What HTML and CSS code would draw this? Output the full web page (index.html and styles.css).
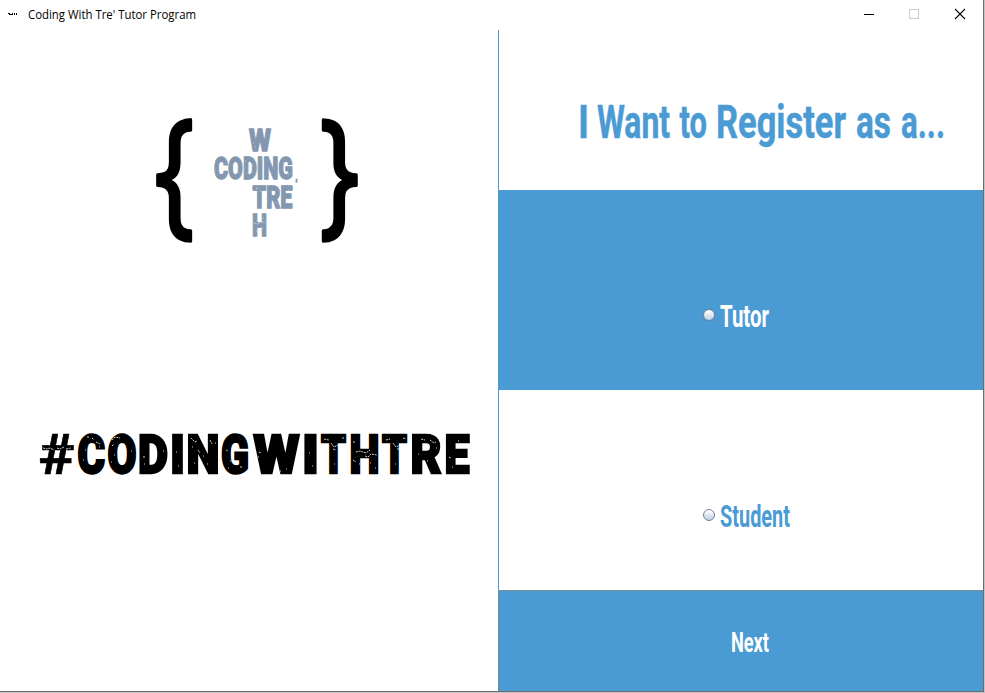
FILE: index.html
```html
<!DOCTYPE html>
<html lang="en">
<head>
<meta charset="utf-8">
<title>Coding With Tre' Tutor Program</title>
<link rel="stylesheet" href="styles.css">
</head>
<body>
<div class="window">
  <header class="titlebar">
    <svg class="app-icon" width="10" height="4" viewBox="0 0 10 4"><path d="M0 .5h2M1 1.500h3M4.500 0v2M6.500 0v2M8.500 0v2"/></svg>
    <svg class="caption" width="180" height="22"><text x="0" y="14" textLength="168" lengthAdjust="spacingAndGlyphs">Coding With Tre' Tutor Program</text></svg>
    <svg class="controls" width="104" height="12" viewBox="0 0 104 12">
      <path class="min" d="M1 5.500h10"/>
      <rect class="max" x="46.500" y=".5" width="9" height="9"/>
      <path class="close" d="M92 0l10 10M102 0L92 10"/>
    </svg>
  </header>
  <main class="content">
    <section class="brand">
      <svg width="498" height="661" viewBox="0 30 498 661">
        <g class="brace">
          <text transform="translate(154.500 219) scale(.870 1.165)" x="0" y="0">{</text>
          <text transform="translate(319.700 219) scale(.870 1.165)" x="0" y="0">}</text>
        </g>
        <g class="mark">
          <text x="249" y="150.500" textLength="22" lengthAdjust="spacingAndGlyphs">W</text>
          <text x="214" y="179" textLength="79" lengthAdjust="spacingAndGlyphs">CODING</text>
          <text x="252.500" y="207.500" textLength="40" lengthAdjust="spacingAndGlyphs">TRE</text>
          <text x="252" y="236" textLength="15" lengthAdjust="spacingAndGlyphs">H</text>
          <text class="tick" x="295.500" y="189">'</text>
        </g>
        <path class="wear thin" d="M253 143h1M255 147h1M227 163h1M238 172h1M245 161h1M252 165h1M261 160h1M268 168h1M283 163h1M288 174h1M256 188l3 1M260 191h1M265 200h1M281 193h1M276 203h1M288 190h1M254 223l4 1 3-2 4 1M262 227v2M256 231h1M263 218h1"/>
        <g class="tag">
          <text class="hash" x="38.500" y="473.500" textLength="36" lengthAdjust="spacingAndGlyphs">#</text>
          <text x="77.500" y="472.500" textLength="27.500" lengthAdjust="spacingAndGlyphs">C</text>
          <text x="107.500" y="472.500" textLength="29" lengthAdjust="spacingAndGlyphs">O</text>
          <text x="138" y="472.500" textLength="30" lengthAdjust="spacingAndGlyphs">D</text>
          <text x="170" y="472.500" textLength="15" lengthAdjust="spacingAndGlyphs">I</text>
          <text x="186.500" y="472.500" textLength="33" lengthAdjust="spacingAndGlyphs">N</text>
          <text x="221" y="472.500" textLength="28" lengthAdjust="spacingAndGlyphs">G</text>
          <text x="253.500" y="472.500" textLength="46" lengthAdjust="spacingAndGlyphs">W</text>
          <text x="302" y="472.500" textLength="17" lengthAdjust="spacingAndGlyphs">I</text>
          <text x="321" y="472.500" textLength="25" lengthAdjust="spacingAndGlyphs">T</text>
          <text x="349.500" y="472.500" textLength="30" lengthAdjust="spacingAndGlyphs">H</text>
          <text x="382" y="472.500" textLength="25" lengthAdjust="spacingAndGlyphs">T</text>
          <text x="410.500" y="472.500" textLength="31" lengthAdjust="spacingAndGlyphs">R</text>
          <text x="444.500" y="472.500" textLength="25" lengthAdjust="spacingAndGlyphs">E</text>
        </g>
        <path class="wear" d="M43 448l4 1 3-1 4 2M57 448l3 1 4-2M66 449l5-1M87 437h2M92 438l2 2M96 442l4 2M99 447h1M85 450h1M83 460h1M112 440l3-3 5 1M112 446l2-2M114 455h1M111 462h1M131 451h1M143 457h2M144 464h1M163 451h1M176 452h1M178 466h1M191 438l4 4 2-1M192 447h1M198 450l2 3M203 456h1M194 463h1M207 464h1M210 440l2 4M215 443h1M226 450l2 1M230 461h1M228 468h1M240 467h2M259 452l2 1M258 457h1M280 471h1M286 469h1M309 453h1M312 466h1M324 439l5 1M331 443l3 4 4-2M333 449l3 1M342 438h2M334 464h1M353 442h2M356 452l4-1 6 2 4-3M365 456l3 1 3-3 6 1M353 460l3 2M359 464h1M370 463h1M375 468h1M361 440h1M386 440l4-1M393 443l3 4 4-2M397 449h2M403 438l3 1M395 464h1M421 439l4 1M430 440l4 3 2-1M436 448h1M418 454h1M427 461h1M449 457l2 1M458 441h1M452 467h1"/>
      </svg>
    </section>
    <section class="register">
      <div class="heading">
        <svg width="484" height="160" viewBox="499 30 484 160">
          <text x="578" y="138" textLength="11" lengthAdjust="spacingAndGlyphs">I</text>
          <text x="597" y="138" textLength="73" lengthAdjust="spacingAndGlyphs">Want</text>
          <text x="679.500" y="138" textLength="27.500" lengthAdjust="spacingAndGlyphs">to</text>
          <text x="716" y="138" textLength="130" lengthAdjust="spacingAndGlyphs">Register</text>
          <text x="856" y="138" textLength="35" lengthAdjust="spacingAndGlyphs">as</text>
          <text x="901" y="138" textLength="44" lengthAdjust="spacingAndGlyphs">a...</text>
        </svg>
      </div>
      <label class="choice tutor">
        <span class="radio"></span>
        <svg width="90" height="50"><text x="0" y="28" textLength="49" lengthAdjust="spacingAndGlyphs">Tutor</text></svg>
      </label>
      <label class="choice student">
        <span class="radio"></span>
        <svg width="90" height="50"><text x="0" y="28" textLength="70" lengthAdjust="spacingAndGlyphs">Student</text></svg>
      </label>
      <button class="next" type="button">
        <svg width="60" height="50"><text x="5" y="30" textLength="38" lengthAdjust="spacingAndGlyphs">Next</text></svg>
      </button>
    </section>
  </main>
</div>
</body>
</html>
```
FILE: styles.css
```css
* { box-sizing: border-box; }
body { margin: 0; background: #c3c3c3; overflow: hidden; }
svg { display: block; flex: none; overflow: visible; }
.window {
  width: 984px;
  height: 692px;
  background: #fff;
  border-right: 1px solid #6c6c6c;
  border-bottom: 1px solid #6c6c6c;
}
.titlebar { display: flex; height: 30px; padding: 0 16px 0 8px; }
.app-icon { margin-top: 13px; fill: none; stroke: #000; }
.caption { margin: 5px 0 0 10px; font: 12px "Open Sans", "Noto Sans", sans-serif; }
.controls { margin: 9px 0 0 auto; fill: none; }
.min { stroke: #000; }
.max { stroke: #ccc; }
.close { stroke: #000; stroke-width: 1.1; }
.content { display: grid; grid-template-columns: 498px 485px; height: 661px; }
.brace { font: 400 120px "Noto Sans", sans-serif; stroke: #000; stroke-width: 3; stroke-linejoin: round; }
.mark { font: 900 32px Roboto, sans-serif; fill: #8497b0; stroke: #8497b0; stroke-width: 1.3; }
.tick { font-size: 12px; stroke-width: .3; }
.wear { fill: none; stroke: #fff; stroke-width: 1; stroke-dasharray: 2 .8; opacity: .8; }
.thin { stroke-width: .8; opacity: .6; }
.tag { font: 900 53px Roboto, sans-serif; stroke: #000; stroke-width: 2.4; }
.hash { font-weight: 700; font-size: 55px; stroke-width: .6; }
.register {
  display: grid;
  grid-template-rows: 160px 200px 200px 101px;
  border-left: 1px solid #4a9bd4;
}
.heading { font: 700 47px Roboto, sans-serif; fill: #4a9bd4; stroke: #4a9bd4; stroke-width: .5; }
.choice { display: flex; padding: 109px 0 0 204px; gap: 5px; font: 700 31px Roboto, sans-serif; }
.tutor { background: #4a9bd4; fill: #fff; }
.student { fill: #4a9bd4; }
.radio {
  width: 12px;
  height: 12px;
  margin-top: 10px;
  border: 1px solid #6f8196;
  border-radius: 50%;
  background: linear-gradient(#fff 10%, #dfe8f2 50%, #bfd0e2);
}
.next {
  display: flex;
  align-items: flex-start;
  padding: 31px 0 0 226px;
  border: 0 solid #7a8a99;
  border-width: 1px 0 0 1px;
  background: #4a9bd4;
  fill: #fff;
  font: 700 28px Roboto, sans-serif;
}
```
